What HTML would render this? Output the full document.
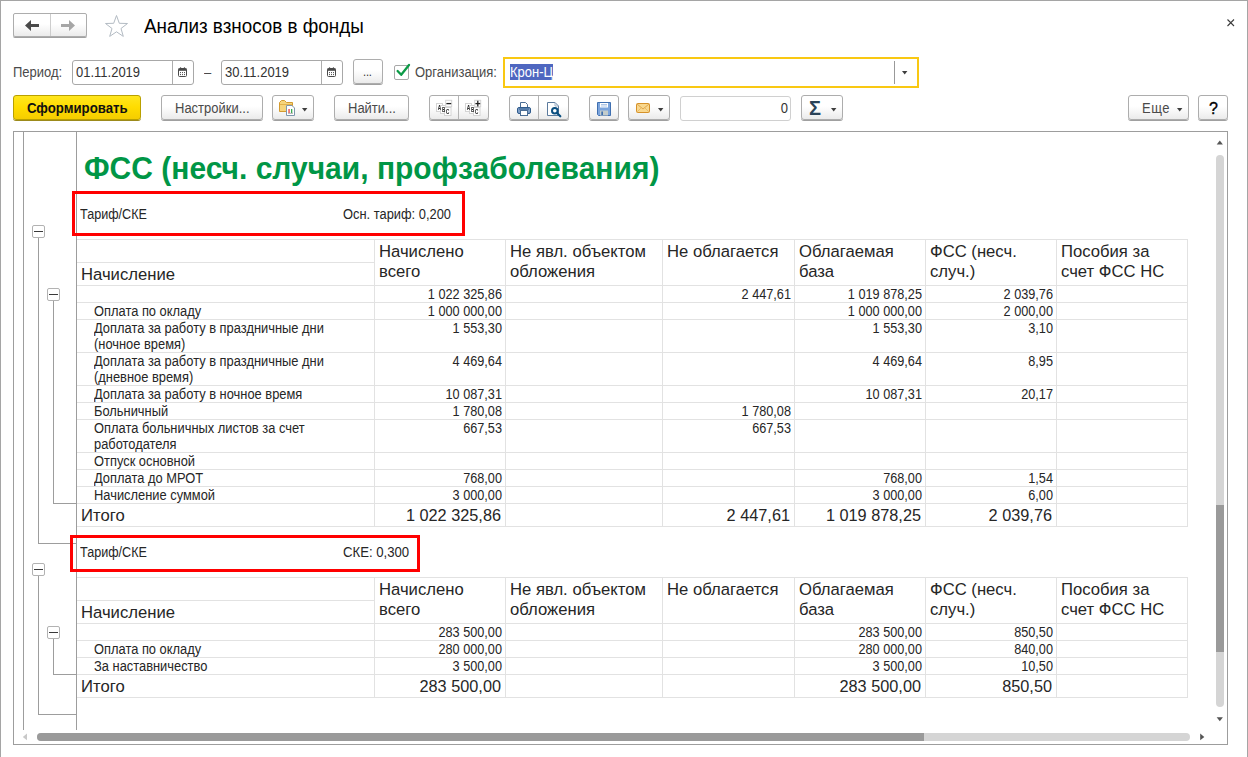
<!DOCTYPE html><html lang="ru"><head><meta charset="utf-8"><title>Анализ взносов в фонды</title><style>
*{box-sizing:border-box;margin:0;padding:0}
html,body{width:1248px;height:757px;overflow:hidden;background:#fff}
body{font-family:"Liberation Sans",sans-serif;font-size:13px;color:#333;position:relative}
.a{position:absolute}
.t{position:absolute;white-space:pre;line-height:1}
.btn{position:absolute;height:25px;top:95px;border:1px solid #adadad;border-radius:3px;background:linear-gradient(#ffffff,#ffffff 45%,#ebebeb);box-shadow:0 1px 0 #a0a0a0}
.lbl{position:absolute;white-space:pre;color:#4a4a4a;font-size:14px;line-height:15px;transform:scaleX(.928);transform-origin:0 0}
.lbl.r{transform-origin:100% 0}
.inp{position:absolute;border:1px solid #a8a8a8;border-radius:3px;background:#fff}
.hl{position:absolute;height:1px;background:#e2e2e2}
.vl{position:absolute;width:1px;background:#e2e2e2}
.gl{position:absolute;background:#9d9d9d}
.s{position:absolute;white-space:pre;font-size:14px;line-height:17px;color:#262626;transform:scaleX(.92);transform-origin:0 0}
.s.r{transform:scaleX(.907);transform-origin:100% 0}
.h{position:absolute;white-space:pre;font-size:16.67px;line-height:20px;color:#262626}
.h.r{font-size:16.3px}
.r{text-align:right}
.mb{position:absolute;width:13px;height:13px;border:1px solid #b2b2b2;border-radius:2px;background:#fff}
.mb i{position:absolute;left:1px;top:5px;width:9px;height:1px;background:#3a3a3a}
.arr{position:absolute;width:0;height:0;border-left:4px solid transparent;border-right:4px solid transparent;border-top:4px solid #444}
</style></head><body>
<div class="a" style="left:0;top:0;width:1248px;height:1px;background:#a5a5a5"></div>
<div class="a" style="left:0;top:0;width:1px;height:757px;background:#a5a5a5"></div>
<div class="a" style="left:1247px;top:0;width:1px;height:757px;background:#a5a5a5"></div>
<div class="btn" style="left:13px;top:13px;width:74px;height:24px;border-radius:2px"></div>
<div class="a" style="left:50px;top:14px;width:1px;height:22px;background:#cdcdcd"></div>
<svg class="a" style="left:24px;top:19px" width="16" height="13" viewBox="0 0 16 13"><path d="M1 6.5 L7 1 V5 H15 V8 H7 V12 Z" fill="#4a4a4a"/></svg>
<svg class="a" style="left:60px;top:19px" width="16" height="13" viewBox="0 0 16 13"><path d="M15 6.5 L9 1 V5 H1 V8 H9 V12 Z" fill="#a6a6a6"/></svg>
<svg class="a" style="left:104px;top:14px" width="25" height="24" viewBox="0 0 25 24"><path d="M12.5 1.5 L15.3 9.3 L23.5 9.5 L17 14.5 L19.3 22.4 L12.5 17.8 L5.7 22.4 L8 14.5 L1.5 9.5 L9.7 9.3 Z" fill="#fff" stroke="#b3bbc3" stroke-width="1"/></svg>
<div class="t" style="left:144px;top:15px;font-size:20px;color:#000;line-height:22px;transform:scaleX(.942);transform-origin:0 0">Анализ взносов в фонды</div>
<svg class="a" style="left:1227px;top:19px" width="8" height="8" viewBox="0 0 8 8"><path d="M0.5 0.5 L7 7 M7 0.5 L0.5 7" stroke="#3c3c3c" stroke-width="1.1" fill="none"/></svg>
<div class="lbl" style="left:13px;top:65px">Период:</div>
<div class="inp" style="left:72px;top:60px;width:122px;height:25px"></div>
<div class="a" style="left:172px;top:61px;width:1px;height:23px;background:#adadad"></div>
<div class="lbl" style="left:76px;top:65px;color:#333">01.11.2019</div>
<div class="lbl" style="left:204px;top:65px">–</div>
<div class="inp" style="left:221px;top:60px;width:122px;height:25px"></div>
<div class="a" style="left:321px;top:61px;width:1px;height:23px;background:#adadad"></div>
<div class="lbl" style="left:225px;top:65px;color:#333">30.11.2019</div>
<svg class="a" style="left:178px;top:67px" width="9" height="10" viewBox="0 0 9 10"><rect x="0.5" y="1.5" width="8" height="8" rx="1" fill="#fff" stroke="#4a4a4a" stroke-width="1"/><rect x="0.5" y="1.5" width="8" height="2.3" fill="#4a4a4a"/><rect x="1.9" y="0.2" width="1.3" height="1.8" rx=".6" fill="#4a4a4a"/><rect x="5.8" y="0.2" width="1.3" height="1.8" rx=".6" fill="#4a4a4a"/><rect x="2" y="5.1" width="1" height="1" fill="#4a4a4a"/><rect x="4" y="5.1" width="1" height="1" fill="#4a4a4a"/><rect x="6" y="5.1" width="1" height="1" fill="#4a4a4a"/><rect x="2" y="7.1" width="1" height="1" fill="#4a4a4a"/><rect x="4" y="7.1" width="1" height="1" fill="#4a4a4a"/><rect x="6" y="7.1" width="1" height="1" fill="#4a4a4a"/></svg>
<svg class="a" style="left:327px;top:67px" width="9" height="10" viewBox="0 0 9 10"><rect x="0.5" y="1.5" width="8" height="8" rx="1" fill="#fff" stroke="#4a4a4a" stroke-width="1"/><rect x="0.5" y="1.5" width="8" height="2.3" fill="#4a4a4a"/><rect x="1.9" y="0.2" width="1.3" height="1.8" rx=".6" fill="#4a4a4a"/><rect x="5.8" y="0.2" width="1.3" height="1.8" rx=".6" fill="#4a4a4a"/><rect x="2" y="5.1" width="1" height="1" fill="#4a4a4a"/><rect x="4" y="5.1" width="1" height="1" fill="#4a4a4a"/><rect x="6" y="5.1" width="1" height="1" fill="#4a4a4a"/><rect x="2" y="7.1" width="1" height="1" fill="#4a4a4a"/><rect x="4" y="7.1" width="1" height="1" fill="#4a4a4a"/><rect x="6" y="7.1" width="1" height="1" fill="#4a4a4a"/></svg>
<div class="btn" style="left:353px;top:59px;width:30px"></div>
<div class="lbl" style="left:363px;top:65px;font-size:12px;letter-spacing:-.2px;color:#333">...</div>
<div class="a" style="left:394px;top:65px;width:15px;height:15px;border:1px solid #a8a8a8;border-radius:2px;background:#fff"></div>
<svg class="a" style="left:394px;top:62px" width="18" height="16" viewBox="0 0 18 16"><path d="M3.6 9 L7.2 12.8 L15 3" fill="none" stroke="#0c9a47" stroke-width="2.3" stroke-linecap="round" stroke-linejoin="round"/></svg>
<div class="lbl" style="left:415px;top:65px">Организация:</div>
<div class="a" style="left:503px;top:57px;width:416px;height:31px;border:2px solid #f9c812;background:#fff"></div>
<div class="a" style="left:510px;top:64px;width:43px;height:16px;background:#4f67c0"></div>
<div class="lbl" style="left:510px;top:65px;color:#fff">Крон-Ц</div>
<div class="a" style="left:894px;top:61px;width:1px;height:23px;background:#999"></div>
<svg class="a" style="left:902px;top:71px" width="6" height="4" viewBox="0 0 6 4"><path d="M0 0 H5.4 L2.7 3.4 Z" fill="#3e3e3e"/></svg>
<div class="btn" style="left:13px;width:128px;border-color:#b9a000;background:linear-gradient(#ffe61e,#ffdc00 50%,#f5cd00);box-shadow:0 1px 0 #9c8a1a"></div>
<div class="lbl" style="left:27px;top:101px;font-weight:bold;color:#111;transform:scaleX(.943)">Сформировать</div>
<div class="btn" style="left:161px;width:102px"></div>
<div class="lbl" style="left:175px;top:101px">Настройки...</div>
<div class="btn" style="left:272px;width:42px"></div>
<div class="btn" style="left:334px;width:75px"></div>
<div class="lbl" style="left:348px;top:101px">Найти...</div>
<div class="btn" style="left:429px;width:60px"></div>
<div class="a" style="left:458px;top:96px;width:1px;height:23px;background:#b4b4b4"></div>
<div class="btn" style="left:509px;width:60px"></div>
<div class="a" style="left:538px;top:96px;width:1px;height:23px;background:#b4b4b4"></div>
<div class="btn" style="left:589px;width:30px"></div>
<div class="btn" style="left:628px;width:42px"></div>
<div class="inp" style="left:680px;top:96px;width:111px;height:25px;border-color:#d0d0d0"></div>
<div class="lbl r" style="left:690px;top:101px;width:98px;color:#333">0</div>
<div class="btn" style="left:801px;width:42px"></div>
<div class="btn" style="left:1128px;width:61px"></div>
<div class="lbl" style="left:1142px;top:101px;letter-spacing:.6px">Еще</div>
<div class="btn" style="left:1198px;width:30px"></div>
<div class="lbl" style="left:1209px;top:100px;font-size:16px;line-height:18px;color:#000;-webkit-text-stroke:.35px #000;transform:none">?</div>
<svg class="a" style="left:302px;top:108px" width="6" height="4" viewBox="0 0 6 4"><path d="M0 0 H5.4 L2.7 3.4 Z" fill="#3e3e3e"/></svg>
<svg class="a" style="left:658px;top:108px" width="6" height="4" viewBox="0 0 6 4"><path d="M0 0 H5.4 L2.7 3.4 Z" fill="#3e3e3e"/></svg>
<svg class="a" style="left:831px;top:108px" width="6" height="4" viewBox="0 0 6 4"><path d="M0 0 H5.4 L2.7 3.4 Z" fill="#3e3e3e"/></svg>
<svg class="a" style="left:1177px;top:108px" width="6" height="4" viewBox="0 0 6 4"><path d="M0 0 H5.4 L2.7 3.4 Z" fill="#3e3e3e"/></svg>
<div class="t" style="left:809px;top:97px;font-size:20px;font-weight:bold;color:#2a4358;line-height:22px">Σ</div>
<svg class="a" style="left:278px;top:99px" width="18" height="18" viewBox="0 0 18 18"><path d="M1.5 12.5 V3.5 L3.5 1.5 H6.5 L8.5 3.5 H14.5 V12.5 Z" fill="#f6d57c" stroke="#d39a2f" stroke-width="1"/><path d="M2 5.5 H14" stroke="#e3b24c" stroke-width="1"/><path d="M8.5 6.5 H14 L16.5 9 V16.5 H8.5 Z" fill="#fff" stroke="#7e96ad" stroke-width="1" stroke-linejoin="round"/><rect x="10.4" y="10" width="1.3" height="4" fill="#e8413a"/><rect x="13" y="10" width="1.3" height="4" fill="#3aaa4f"/><path d="M10 14.3 H15" stroke="#8a8a8a" stroke-width=".7"/></svg>
<svg class="a" style="left:436px;top:99px;will-change:transform" width="17" height="18" viewBox="0 0 17 18" font-family="Liberation Sans,sans-serif" font-weight="bold" font-size="6.6" fill="#2a2a2a"><rect x="0.5" y="4.5" width="6" height="8" fill="#fff" stroke="#d4d4d4"/><rect x="4.5" y="6.5" width="6.5" height="8" fill="#fff" stroke="#d4d4d4"/><rect x="8.5" y="8.5" width="6.5" height="8" fill="#fff" stroke="#d4d4d4"/><rect x="9.7" y="1.3" width="6" height="6.4" fill="#fff" stroke="#d4d4d4"/><path d="M10.4 4.6 H15.2" stroke="#222" stroke-width="1.3"/><text x="1.7" y="11.1" textLength="3.4" lengthAdjust="spacingAndGlyphs">A</text><text x="5.9" y="13.1" textLength="3.3" lengthAdjust="spacingAndGlyphs">B</text><text x="9.7" y="15.1" textLength="3.6" lengthAdjust="spacingAndGlyphs">C</text></svg>
<svg class="a" style="left:465px;top:99px;will-change:transform" width="17" height="18" viewBox="0 0 17 18" font-family="Liberation Sans,sans-serif" font-weight="bold" font-size="6.6" fill="#2a2a2a"><rect x="0.5" y="4.5" width="6" height="8" fill="#fff" stroke="#d4d4d4"/><rect x="4.5" y="6.5" width="6.5" height="8" fill="#fff" stroke="#d4d4d4"/><rect x="8.5" y="8.5" width="6.5" height="8" fill="#fff" stroke="#d4d4d4"/><rect x="9.7" y="1.3" width="6" height="6.4" fill="#fff" stroke="#d4d4d4"/><path d="M10.4 4.6 H15.2" stroke="#222" stroke-width="1.3"/><path d="M12.8 1.8 V7.4" stroke="#222" stroke-width="1.3"/><text x="1.7" y="11.1" textLength="3.4" lengthAdjust="spacingAndGlyphs">A</text><text x="5.9" y="13.1" textLength="3.3" lengthAdjust="spacingAndGlyphs">B</text><text x="9.7" y="15.1" textLength="3.6" lengthAdjust="spacingAndGlyphs">C</text></svg>
<svg class="a" style="left:516px;top:101px" width="16" height="16" viewBox="0 0 16 16"><path d="M4.5 6 V1.5 H9.5 L11.5 3.5 V6" fill="#fff" stroke="#4b6d94" stroke-width="1"/><rect x="1.5" y="6.5" width="13" height="6" rx="1.5" fill="#7f9fc7" stroke="#2f5b8c" stroke-width="1"/><path d="M3 8 H13" stroke="#2f5b8c" stroke-width="1"/><rect x="4.5" y="9.5" width="7" height="5" fill="#fff" stroke="#4b6d94" stroke-width="1"/></svg>
<svg class="a" style="left:546px;top:101px" width="16" height="17" viewBox="0 0 16 17"><path d="M1.5 1.5 H9 L12.5 5 V14.5 H1.5 Z" fill="#fff" stroke="#5b7a9d" stroke-width="1"/><path d="M9 1.5 V5 H12.5" fill="none" stroke="#9fb2c6" stroke-width="1"/><circle cx="8.8" cy="9.8" r="2.8" fill="#fff" stroke="#0b4f80" stroke-width="2"/><path d="M11 12 L14.3 15.3" stroke="#0b4f80" stroke-width="2.2" stroke-linecap="round"/></svg>
<svg class="a" style="left:596px;top:101px" width="16" height="16" viewBox="0 0 16 16"><path d="M1.5 1.5 H14.5 V14.5 H2.5 L1.5 13.5 Z" fill="#7ba4dc" stroke="#3f6fb0" stroke-width="1"/><rect x="4" y="2" width="8" height="4.5" fill="#fff"/><path d="M5 3.5 H11 M5 5 H11" stroke="#9bb7e0" stroke-width=".8"/><rect x="4" y="9.5" width="8" height="5" fill="#c3cccb"/><rect x="5.3" y="10.5" width="1.7" height="3.5" fill="#3f6fb0"/></svg>
<svg class="a" style="left:635px;top:102px" width="16" height="12" viewBox="0 0 16 12"><rect x="1.5" y="1.5" width="13" height="9" rx="1" fill="#f9d88e" stroke="#d6922a" stroke-width="1"/><path d="M2 2 L8 7 L14 2" fill="none" stroke="#dfa64a" stroke-width="1"/><path d="M2 10 L6 6 M14 10 L10 6" fill="none" stroke="#e6b867" stroke-width=".9"/></svg>
<div class="a" style="left:13px;top:131px;width:1215px;height:614px;border:1px solid #9d9d9d"></div>
<div class="gl" style="left:23px;top:132px;width:1px;height:598px"></div>
<div class="gl" style="left:76px;top:132px;width:1px;height:598px"></div>
<div class="a" style="left:1216px;top:155px;width:8px;height:552px;border-radius:4px;background:#d5d5d5"></div>
<div class="a" style="left:1216px;top:505px;width:8px;height:147px;background:#9a9a9a"></div>
<svg class="a" style="left:1216px;top:140px" width="8" height="5" viewBox="0 0 8 5"><path d="M0.7 4.4 H6.9 L3.8 0.4 Z" fill="#555"/></svg>
<svg class="a" style="left:1216px;top:717px" width="8" height="5" viewBox="0 0 8 5"><path d="M0.7 0.2 H6.9 L3.8 4.3 Z" fill="#555"/></svg>
<div class="a" style="left:37px;top:733px;width:1153px;height:8px;border-radius:4px;background:#d5d5d5"></div>
<div class="a" style="left:37px;top:733px;width:887px;height:8px;border-radius:4px 0 0 4px;background:#9a9a9a"></div>
<svg class="a" style="left:22px;top:733px" width="6" height="8" viewBox="0 0 6 8"><path d="M5 0.6 V7.2 L0.8 3.9 Z" fill="#c9c9c9"/></svg>
<svg class="a" style="left:1200px;top:733px" width="6" height="8" viewBox="0 0 6 8"><path d="M0.2 0.6 V7.2 L4.3 3.9 Z" fill="#555"/></svg>
<div class="t" style="left:84px;top:152px;font-size:30px;font-weight:bold;color:#009646;line-height:34px;transform:scaleY(1.06);transform-origin:0 27px">ФСС (несч. случаи, профзаболевания)</div>
<div class="gl" style="left:38px;top:238px;width:1px;height:306px"></div>
<div class="gl" style="left:38px;top:543px;width:38px;height:1px"></div>
<div class="gl" style="left:53px;top:301px;width:1px;height:203px"></div>
<div class="gl" style="left:53px;top:503px;width:23px;height:1px"></div>
<div class="gl" style="left:38px;top:576px;width:1px;height:139px"></div>
<div class="gl" style="left:38px;top:714px;width:38px;height:1px"></div>
<div class="gl" style="left:53px;top:639px;width:1px;height:36px"></div>
<div class="gl" style="left:53px;top:674px;width:23px;height:1px"></div>
<div class="mb" style="left:32px;top:225px"><i></i></div>
<div class="mb" style="left:47px;top:288px"><i></i></div>
<div class="mb" style="left:32px;top:563px"><i></i></div>
<div class="mb" style="left:47px;top:626px"><i></i></div>
<div class="hl" style="left:77px;top:239px;width:1111px"></div>
<div class="hl" style="left:77px;top:262px;width:297px"></div>
<div class="h" style="left:81px;top:265px">Начисление</div>
<div class="h" style="left:379px;top:242px">Начислено</div>
<div class="h" style="left:379px;top:262px">всего</div>
<div class="h" style="left:510px;top:242px">Не явл. объектом</div>
<div class="h" style="left:510px;top:262px">обложения</div>
<div class="h" style="left:667px;top:242px">Не облагается</div>
<div class="h" style="left:799px;top:242px">Облагаемая</div>
<div class="h" style="left:799px;top:262px">база</div>
<div class="h" style="left:930px;top:242px">ФСС (несч.</div>
<div class="h" style="left:930px;top:262px">случ.)</div>
<div class="h" style="left:1061px;top:242px">Пособия за</div>
<div class="h" style="left:1061px;top:262px">счет ФСС НС</div>
<div class="hl" style="left:77px;top:285px;width:1111px"></div>
<div class="s r" style="left:375px;top:286px;width:127px">1 022 325,86</div>
<div class="s r" style="left:663px;top:286px;width:128px">2 447,61</div>
<div class="s r" style="left:795px;top:286px;width:127px">1 019 878,25</div>
<div class="s r" style="left:926px;top:286px;width:127px">2 039,76</div>
<div class="hl" style="left:77px;top:302px;width:1111px"></div>
<div class="s" style="left:94px;top:303px">Оплата по окладу</div>
<div class="s r" style="left:375px;top:303px;width:127px">1 000 000,00</div>
<div class="s r" style="left:795px;top:303px;width:127px">1 000 000,00</div>
<div class="s r" style="left:926px;top:303px;width:127px">2 000,00</div>
<div class="hl" style="left:77px;top:319px;width:1111px"></div>
<div class="s" style="left:94px;top:320px">Доплата за работу в праздничные дни</div>
<div class="s" style="left:94px;top:336px">(ночное время)</div>
<div class="s r" style="left:375px;top:320px;width:127px">1 553,30</div>
<div class="s r" style="left:795px;top:320px;width:127px">1 553,30</div>
<div class="s r" style="left:926px;top:320px;width:127px">3,10</div>
<div class="hl" style="left:77px;top:352px;width:1111px"></div>
<div class="s" style="left:94px;top:353px">Доплата за работу в праздничные дни</div>
<div class="s" style="left:94px;top:369px">(дневное время)</div>
<div class="s r" style="left:375px;top:353px;width:127px">4 469,64</div>
<div class="s r" style="left:795px;top:353px;width:127px">4 469,64</div>
<div class="s r" style="left:926px;top:353px;width:127px">8,95</div>
<div class="hl" style="left:77px;top:385px;width:1111px"></div>
<div class="s" style="left:94px;top:386px">Доплата за работу в ночное время</div>
<div class="s r" style="left:375px;top:386px;width:127px">10 087,31</div>
<div class="s r" style="left:795px;top:386px;width:127px">10 087,31</div>
<div class="s r" style="left:926px;top:386px;width:127px">20,17</div>
<div class="hl" style="left:77px;top:402px;width:1111px"></div>
<div class="s" style="left:94px;top:403px">Больничный</div>
<div class="s r" style="left:375px;top:403px;width:127px">1 780,08</div>
<div class="s r" style="left:663px;top:403px;width:128px">1 780,08</div>
<div class="hl" style="left:77px;top:419px;width:1111px"></div>
<div class="s" style="left:94px;top:420px">Оплата больничных листов за счет</div>
<div class="s" style="left:94px;top:436px">работодателя</div>
<div class="s r" style="left:375px;top:420px;width:127px">667,53</div>
<div class="s r" style="left:663px;top:420px;width:128px">667,53</div>
<div class="hl" style="left:77px;top:452px;width:1111px"></div>
<div class="s" style="left:94px;top:453px">Отпуск основной</div>
<div class="hl" style="left:77px;top:469px;width:1111px"></div>
<div class="s" style="left:94px;top:470px">Доплата до МРОТ</div>
<div class="s r" style="left:375px;top:470px;width:127px">768,00</div>
<div class="s r" style="left:795px;top:470px;width:127px">768,00</div>
<div class="s r" style="left:926px;top:470px;width:127px">1,54</div>
<div class="hl" style="left:77px;top:486px;width:1111px"></div>
<div class="s" style="left:94px;top:487px">Начисление суммой</div>
<div class="s r" style="left:375px;top:487px;width:127px">3 000,00</div>
<div class="s r" style="left:795px;top:487px;width:127px">3 000,00</div>
<div class="s r" style="left:926px;top:487px;width:127px">6,00</div>
<div class="hl" style="left:77px;top:503px;width:1111px"></div>
<div class="h" style="left:81px;top:506px">Итого</div>
<div class="h r" style="left:375px;top:505px;width:126px">1 022 325,86</div>
<div class="h r" style="left:663px;top:505px;width:127px">2 447,61</div>
<div class="h r" style="left:795px;top:505px;width:126px">1 019 878,25</div>
<div class="h r" style="left:926px;top:505px;width:126px">2 039,76</div>
<div class="hl" style="left:77px;top:526px;width:1111px"></div>
<div class="vl" style="left:374px;top:239px;height:288px"></div>
<div class="vl" style="left:505px;top:239px;height:288px"></div>
<div class="vl" style="left:662px;top:239px;height:288px"></div>
<div class="vl" style="left:794px;top:239px;height:288px"></div>
<div class="vl" style="left:925px;top:239px;height:288px"></div>
<div class="vl" style="left:1056px;top:239px;height:288px"></div>
<div class="vl" style="left:1187px;top:239px;height:288px"></div>
<div class="hl" style="left:77px;top:577px;width:1111px"></div>
<div class="hl" style="left:77px;top:600px;width:297px"></div>
<div class="h" style="left:81px;top:603px">Начисление</div>
<div class="h" style="left:379px;top:580px">Начислено</div>
<div class="h" style="left:379px;top:600px">всего</div>
<div class="h" style="left:510px;top:580px">Не явл. объектом</div>
<div class="h" style="left:510px;top:600px">обложения</div>
<div class="h" style="left:667px;top:580px">Не облагается</div>
<div class="h" style="left:799px;top:580px">Облагаемая</div>
<div class="h" style="left:799px;top:600px">база</div>
<div class="h" style="left:930px;top:580px">ФСС (несч.</div>
<div class="h" style="left:930px;top:600px">случ.)</div>
<div class="h" style="left:1061px;top:580px">Пособия за</div>
<div class="h" style="left:1061px;top:600px">счет ФСС НС</div>
<div class="hl" style="left:77px;top:623px;width:1111px"></div>
<div class="s r" style="left:375px;top:624px;width:127px">283 500,00</div>
<div class="s r" style="left:795px;top:624px;width:127px">283 500,00</div>
<div class="s r" style="left:926px;top:624px;width:127px">850,50</div>
<div class="hl" style="left:77px;top:640px;width:1111px"></div>
<div class="s" style="left:94px;top:641px">Оплата по окладу</div>
<div class="s r" style="left:375px;top:641px;width:127px">280 000,00</div>
<div class="s r" style="left:795px;top:641px;width:127px">280 000,00</div>
<div class="s r" style="left:926px;top:641px;width:127px">840,00</div>
<div class="hl" style="left:77px;top:657px;width:1111px"></div>
<div class="s" style="left:94px;top:658px">За наставничество</div>
<div class="s r" style="left:375px;top:658px;width:127px">3 500,00</div>
<div class="s r" style="left:795px;top:658px;width:127px">3 500,00</div>
<div class="s r" style="left:926px;top:658px;width:127px">10,50</div>
<div class="hl" style="left:77px;top:674px;width:1111px"></div>
<div class="h" style="left:81px;top:677px">Итого</div>
<div class="h r" style="left:375px;top:676px;width:126px">283 500,00</div>
<div class="h r" style="left:795px;top:676px;width:126px">283 500,00</div>
<div class="h r" style="left:926px;top:676px;width:126px">850,50</div>
<div class="hl" style="left:77px;top:697px;width:1111px"></div>
<div class="vl" style="left:374px;top:577px;height:121px"></div>
<div class="vl" style="left:505px;top:577px;height:121px"></div>
<div class="vl" style="left:662px;top:577px;height:121px"></div>
<div class="vl" style="left:794px;top:577px;height:121px"></div>
<div class="vl" style="left:925px;top:577px;height:121px"></div>
<div class="vl" style="left:1056px;top:577px;height:121px"></div>
<div class="vl" style="left:1187px;top:577px;height:121px"></div>
<div class="a" style="left:72px;top:191px;width:393px;height:45px;border:3px solid #ff0000"></div>
<div class="s" style="left:80px;top:206px;transform:scaleX(.9)">Тариф/СКЕ</div>
<div class="s" style="left:343px;top:206px">Осн. тариф: 0,200</div>
<div class="a" style="left:70px;top:535px;width:350px;height:37px;border:3px solid #ff0000"></div>
<div class="s" style="left:80px;top:544px;transform:scaleX(.9)">Тариф/СКЕ</div>
<div class="s" style="left:343px;top:544px;transform:scaleX(.94)">СКЕ: 0,300</div>
</body></html>
